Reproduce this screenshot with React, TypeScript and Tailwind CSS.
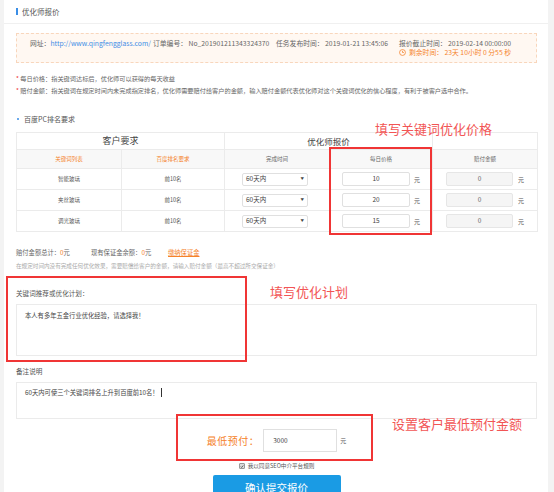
import React from 'react'

const rows = [
  { kw: '智能玻璃', rank: '前10名', price: '10' },
  { kw: '夹丝玻璃', rank: '前10名', price: '20' },
  { kw: '调光玻璃', rank: '前10名', price: '15' },
]

function Clock() {
  return (
    <svg width="7" height="7" viewBox="0 0 10 10" className="mr-[3px] shrink-0">
      <circle cx="5" cy="5" r="4.2" fill="none" stroke="#f5822a" strokeWidth="1.1" />
      <path d="M5 2.6V5h2" fill="none" stroke="#f5822a" strokeWidth="1.1" />
    </svg>
  )
}

export default function App() {
  return (
    <div className="w-[554px] h-[492px] overflow-hidden bg-[#f3f3f3] pl-[4px] pr-[6px] font-['Noto_Sans_CJK_SC',sans-serif] text-[#555]">
      <div className="relative bg-white h-full">
        <div className="h-[24px] border-b border-[#f0f0f0] flex items-center pl-[12px]">
          <span className="w-[2px] h-[7px] bg-[#3a8ee6] mr-[4px]" />
          <span className="text-[7.5px] leading-none text-[#555]">优化师报价</span>
        </div>

        <div className="pl-[12px] pr-[11px]">
          {/* order info */}
          <div className="mt-[9px] h-[30px] border border-dashed border-[#f8d6bc] bg-[#fff8f2] flex pl-[13px] pt-[5px] text-[6.8px] leading-[9px] text-[#666]">
            <div className="w-[123px] whitespace-nowrap">
              网址：<span className="text-[#3d8de6]">http://www.qingfengglass.com/</span>
            </div>
            <div className="w-[123px] whitespace-nowrap">订单编号： No_201901211343324370</div>
            <div className="w-[123px] whitespace-nowrap">任务发布时间： 2019-01-21 13:45:06</div>
            <div className="whitespace-nowrap">
              <div>报价截止时间： 2019-02-14 00:00:00</div>
              <div className="flex items-center text-[#f5822a]">
                <Clock />剩余时间： 23天 10小时 0 分55 秒
              </div>
            </div>
          </div>

          {/* notes */}
          <div className="mt-[10px] text-[6.2px] leading-[12px] text-[#666] whitespace-nowrap">
            <div><span className="text-[#e33]">*</span> 每日价格：指关键词达标后，优化师可以获得的每天收益</div>
            <div><span className="text-[#e33]">*</span> 赔付金额：指关键词在规定时间内未完成指定排名，优化师需要赔付给客户的金额，输入赔付金额代表优化师对这个关键词优化的信心程度，有利于被客户选中合作。</div>
          </div>

          <div className="mt-[17px] h-[10px] flex items-center text-[7px] text-[#555]">
            <span className="w-[2px] h-[2px] rounded-full bg-[#3a8ee6] ml-[1px] mr-[5px]" />
            百度PC排名要求
          </div>

          {/* ranking table */}
          <table className="mt-[8px] w-[521px] table-fixed border-collapse text-center text-[5.5px] text-[#555]">
            <colgroup>
              <col className="w-[105px]" />
              <col className="w-[103px]" />
              <col className="w-[105px]" />
              <col className="w-[103px]" />
              <col className="w-[105px]" />
            </colgroup>
            <tbody>
              <tr className="h-[17px]">
                <td colSpan={2} className="border border-[#ebebeb] text-[9px] text-[#444]">客户要求</td>
                <td colSpan={2} className="border border-[#ebebeb] text-[8.5px] text-[#444]">优化师报价</td>
                <td className="border border-[#ebebeb]" />
              </tr>
              <tr className="h-[19px] bg-[#f8f8f8]">
                <td className="border border-[#ebebeb] text-[#f5822a]">关键词列表</td>
                <td className="border border-[#ebebeb] text-[#f5822a]">百度排名要求</td>
                <td className="border border-[#ebebeb] text-[#666]">完成时间</td>
                <td className="border border-[#ebebeb] text-[#666]">每日价格</td>
                <td className="border border-[#ebebeb] text-[#666]">赔付金额</td>
              </tr>
              {rows.map(r => (
                <tr key={r.kw} className="h-[21px]">
                  <td className="border border-[#ebebeb]">{r.kw}</td>
                  <td className="border border-[#ebebeb]">{r.rank}</td>
                  <td className="border border-[#ebebeb]">
                    <div className="ml-[17px] w-[66px] h-[13px] border border-[#e0e0e0] rounded-[2px] flex items-center justify-between px-[3px] text-[6.5px] text-[#444]">
                      <span>60天内</span>
                      <span className="text-[3.5px]">▼</span>
                    </div>
                  </td>
                  <td className="border border-[#ebebeb]">
                    <div className="ml-[12px] flex items-center">
                      <div className="w-[68px] h-[14px] border border-[#e0e0e0] rounded-[2px] flex items-center justify-center text-[6.5px] text-[#444]">{r.price}</div>
                      <span className="ml-[4px] text-[6px]">元</span>
                    </div>
                  </td>
                  <td className="border border-[#ebebeb]">
                    <div className="ml-[13px] flex items-center">
                      <div className="w-[67px] h-[14px] border border-[#e6e6e6] bg-[#f5f5f5] rounded-[2px] flex items-center justify-center text-[6.5px] text-[#666]">0</div>
                      <span className="ml-[5px] text-[6px]">元</span>
                    </div>
                  </td>
                </tr>
              ))}
            </tbody>
          </table>

          {/* deposit */}
          <div className="mt-[16px] h-[10px] flex items-center text-[6.3px] text-[#666] whitespace-nowrap">
            <span className="w-[75px]">赔付金额总计：<span className="text-[#f5822a]">0</span>元</span>
            <span className="w-[77px]">现有保证金余额：<span className="text-[#f5822a]">0</span>元</span>
            <span className="text-[#f5822a] underline">缴纳保证金</span>
          </div>
          <div className="mt-[3px] h-[10px] leading-[10px] text-[5.6px] text-[#aaa] whitespace-nowrap">
            在规定时间内没有完成任何优化效果，需要赔偿给客户的金额，请输入赔付金额（最高不超过所交保证金）
          </div>

          {/* plan */}
          <div className="mt-[17px] h-[10px] leading-[10px] text-[6.6px] text-[#555]">关键词推荐或优化计划：</div>
          <div className="mt-[6px] h-[52px] border border-[#ebebeb] pl-[8px] pt-[6px] text-[6.3px] leading-[10px] text-[#444]">
            本人有多年五金行业优化经验，请选择我！
          </div>

          <div className="mt-[10px] h-[10px] leading-[10px] text-[6.6px] text-[#555]">备注说明</div>
          <div className="mt-[6px] h-[37px] border border-[#ebebeb] pl-[8px] pt-[5px] text-[6.3px] leading-[10px] text-[#444] flex items-start">
            60天内可使三个关键词排名上升到百度前10名！<span className="ml-[2px] w-px h-[9px] bg-[#333]" />
          </div>

          {/* prepay */}
          <div className="mt-[10px] flex items-center justify-center">
            <span className="text-[10px] text-[#f5822a] tracking-[0.5px]">最低预付：</span>
            <div className="ml-[4px] w-[74px] h-[23px] border border-[#e0e0e0] flex items-center pl-[9px] text-[6.5px] text-[#444]">3000</div>
            <span className="ml-[3px] text-[6px]">元</span>
          </div>

          <div className="mt-[9px] h-[10px] flex items-center justify-center text-[5.6px] text-[#555]">
            <span className="w-[6px] h-[6px] bg-[#dcdcdc] border border-[#999] rounded-[1px] flex items-center justify-center mr-[3px]">
              <svg width="5" height="5" viewBox="0 0 10 10">
                <path d="M2 5.2l2 2.2L8.2 2.5" fill="none" stroke="#333" strokeWidth="1.8" />
              </svg>
            </span>
            我以同意SEO中介平台规则
          </div>

          <div className="mt-[4px] flex justify-center">
            <div className="w-[128px] h-[26px] bg-[#1a9be4] rounded-t-[2px] flex items-center justify-center text-[10.5px] text-white">
              确认提交报价
            </div>
          </div>
        </div>

        {/* annotations */}
        <div className="absolute left-[325px] top-[147px] w-[103px] h-[88px] border-2 border-[#f03535]" />
        <div className="absolute left-[371px] top-[121px] text-[13px] leading-[16px] text-[#f25555] whitespace-nowrap">填写关键词优化价格</div>

        <div className="absolute left-[2px] top-[276px] w-[241px] h-[86px] border-2 border-[#f03535]" />
        <div className="absolute left-[266px] top-[284px] text-[13px] leading-[16px] text-[#f25555] whitespace-nowrap">填写优化计划</div>

        <div className="absolute left-[172px] top-[414px] w-[197px] h-[47px] border-2 border-[#f03535]" />
        <div className="absolute left-[388px] top-[416px] text-[13px] leading-[16px] text-[#f25555] whitespace-nowrap">设置客户最低预付金额</div>
      </div>
    </div>
  )
}
